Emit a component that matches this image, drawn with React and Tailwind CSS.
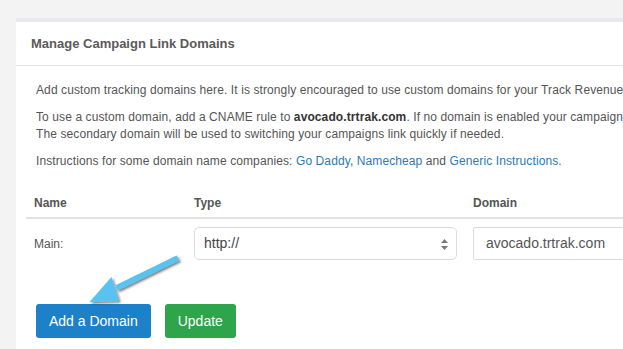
import React from "react";

export default function App() {
  return (
    <div
      className="relative h-[349px] w-[623px] overflow-hidden bg-[#f3f3f3] pt-[18px] pl-[16px]"
      style={{ fontFamily: '"Liberation Sans", Arial, Helvetica, sans-serif' }}
    >
      <div className="w-[720px] border-t-4 border-[#e7eaed] bg-white text-[#555]">
        <div className="flex h-[44px] items-center border-b border-[#e5e5e5] px-[15px]">
          <h3 className="text-[13px] font-bold text-[#5a5a5a]">Manage Campaign Link Domains</h3>
        </div>
        <div className="px-[10px] pt-[16px] pb-[12px]">
          <div className="px-[10px] text-[12px] leading-[17px] tracking-[0.1px]">
            <p className="mb-[10px] whitespace-nowrap">
              Add custom tracking domains here. It is strongly encouraged to use custom domains for your Track Revenue campaigns.
            </p>
            <p className="mb-[10px] whitespace-nowrap">
              To use a custom domain, add a CNAME rule to <b className="text-[#333]">avocado.trtrak.com</b>. If no domain is enabled your campaigns will use the default domain.
              <br />
              The secondary domain will be used to switching your campaigns link quickly if needed.
            </p>
            <p className="whitespace-nowrap">
              Instructions for some domain name companies: <a className="text-[#2a7ab8]">Go Daddy</a>,{" "}
              <a className="text-[#2a7ab8]">Namecheap</a> and <a className="text-[#2a7ab8]">Generic Instructions</a>.
            </p>
          </div>
          <table className="mt-[14px] w-full border-collapse text-[12px]">
            <thead>
              <tr className="border-b-2 border-[#e2e2e2]">
                <th className="w-[160px] px-[8px] pt-[11px] pb-[5px] text-left leading-[17px] font-bold">Name</th>
                <th className="w-[279px] px-[8px] pt-[11px] pb-[5px] text-left leading-[17px] font-bold">Type</th>
                <th className="px-[8px] pt-[11px] pb-[5px] text-left leading-[17px] font-bold">Domain</th>
              </tr>
            </thead>
            <tbody>
              <tr>
                <td className="px-[8px] py-[8px] align-middle">Main:</td>
                <td className="px-[8px] py-[8px]">
                  <div className="relative flex h-[33px] w-[263px] items-center rounded-[5px] border border-[#dcdcdc] pl-[9px] text-[14px] text-[#444]">
                    http://
                    <svg className="absolute right-[8px] top-[11px]" width="7" height="11" viewBox="0 0 7 11">
                      <path d="M3.5 0 L7 4 L0 4 Z" fill="#7a7a7a" />
                      <path d="M3.5 11 L7 7 L0 7 Z" fill="#7a7a7a" />
                    </svg>
                  </div>
                </td>
                <td className="px-[8px] py-[8px]">
                  <div className="flex h-[33px] w-[220px] items-center rounded-[2px] border border-[#dcdcdc] pl-[12px] text-[14px] text-[#555]">
                    avocado.trtrak.com
                  </div>
                </td>
              </tr>
            </tbody>
          </table>
          <div className="mt-[36px] flex gap-[14px] px-[10px]">
            <button className="h-[34px] rounded-[3px] bg-[#1c81c8] px-[13px] text-[14px] text-white">Add a Domain</button>
            <button className="h-[34px] rounded-[3px] bg-[#2ea44b] px-[13px] text-[14px] text-white">Update</button>
          </div>
        </div>
      </div>
      <svg className="absolute left-0 top-0" width="623" height="349" viewBox="0 0 623 349">
        <defs>
          <filter id="sh" x="-20%" y="-20%" width="140%" height="140%">
            <feDropShadow dx="1.5" dy="1.5" stdDeviation="1.2" floodColor="#000" floodOpacity="0.55" />
          </filter>
        </defs>
        <g filter="url(#sh)" fill="#58c3f1">
          <path d="M176.5 255.5 L179.5 260.5 L118 290.5 L115 285.5 Z" />
          <path d="M89.5 302 L111.5 277 L119 301 Z" />
        </g>
      </svg>
    </div>
  );
}
